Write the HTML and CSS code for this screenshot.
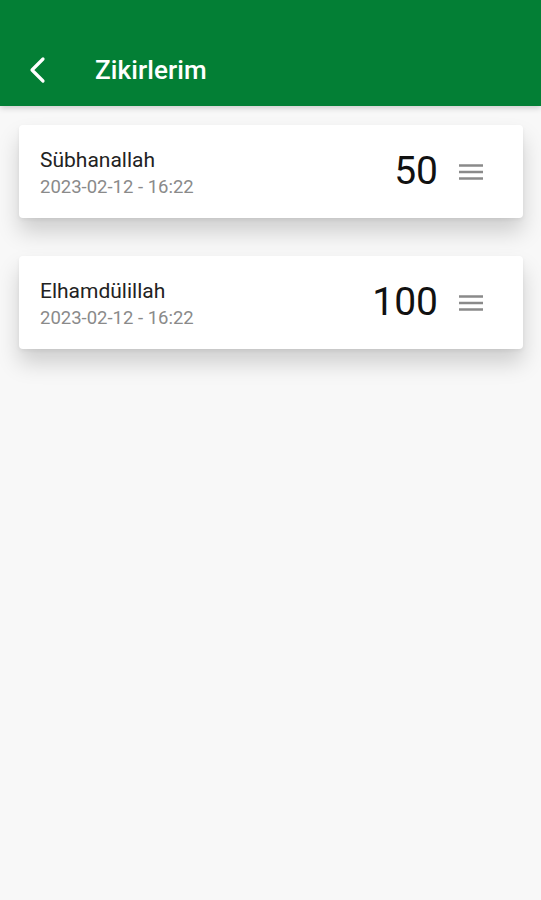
FILE: index.html
```html
<!DOCTYPE html>
<html lang="tr">
<head>
<meta charset="utf-8">
<title>Zikirlerim</title>
<link rel="stylesheet" href="styles.css">
</head>
<body>
<header class="appbar">
  <button class="back" aria-label="Geri">
    <svg width="20" height="28" viewBox="0 0 20 28"><path d="M15 3 L4 14 L15 25" fill="none" stroke="#fff" stroke-width="3.2" stroke-linecap="round" stroke-linejoin="round"/></svg>
  </button>
  <h1 class="title">Zikirlerim</h1>
</header>
<main class="list">
  <div class="card">
    <div class="info">
      <div class="name">Sübhanallah</div>
      <div class="date">2023-02-12 - 16:22</div>
    </div>
    <div class="count">50</div>
    <svg class="menu" width="26" height="18" viewBox="0 0 26 18"><path d="M1 2.5H25M1 9H25M1 15.5H25" stroke="#8a8a8a" stroke-width="2.4"/></svg>
  </div>
  <div class="card">
    <div class="info">
      <div class="name">Elhamdülillah</div>
      <div class="date">2023-02-12 - 16:22</div>
    </div>
    <div class="count">100</div>
    <svg class="menu" width="26" height="18" viewBox="0 0 26 18"><path d="M1 2.5H25M1 9H25M1 15.5H25" stroke="#8a8a8a" stroke-width="2.4"/></svg>
  </div>
</main>
</body>
</html>
```
FILE: styles.css
```css
* { box-sizing: border-box; }
html, body { margin: 0; padding: 0; }
body {
  background: #f8f8f8;
  font-family: Roboto, "Noto Sans", sans-serif;
  width: 541px;
  height: 900px;
  overflow: hidden;
}
.appbar {
  height: 106px;
  background: #037f35;
  display: flex;
  align-items: center;
  padding: 34px 0 0 28px;
  box-shadow: 0 2px 6px rgba(0,0,0,0.18);
  position: relative;
  z-index: 1;
}
.back {
  background: none;
  border: 0;
  padding: 0;
  width: 20px;
  height: 28px;
  display: flex;
}
.title {
  margin: 0 0 0 47px;
  color: #fff;
  font-size: 26px;
  font-weight: 500;
  letter-spacing: 0.1px;
}
.list {
  display: flex;
  flex-direction: column;
  gap: 38px;
  padding: 19px 18px 0 19px;
}
.card {
  height: 93px;
  background: #fff;
  border-radius: 4px;
  display: flex;
  align-items: center;
  padding: 0 39px 0 21px;
  box-shadow: 0 14px 22px rgba(0,0,0,0.17), 0 2px 4px rgba(0,0,0,0.06);
}
.info { flex: 1; display: flex; flex-direction: column; gap: 3px; padding-top: 1px; }
.name { font-size: 21px; color: #222; line-height: 26px; }
.date { font-size: 18.5px; color: #8a8a8a; line-height: 22px; }
.count {
  font-size: 39px;
  color: #111;
  margin-right: 20px;
  line-height: 1;
}
.menu { display: block; }
```
